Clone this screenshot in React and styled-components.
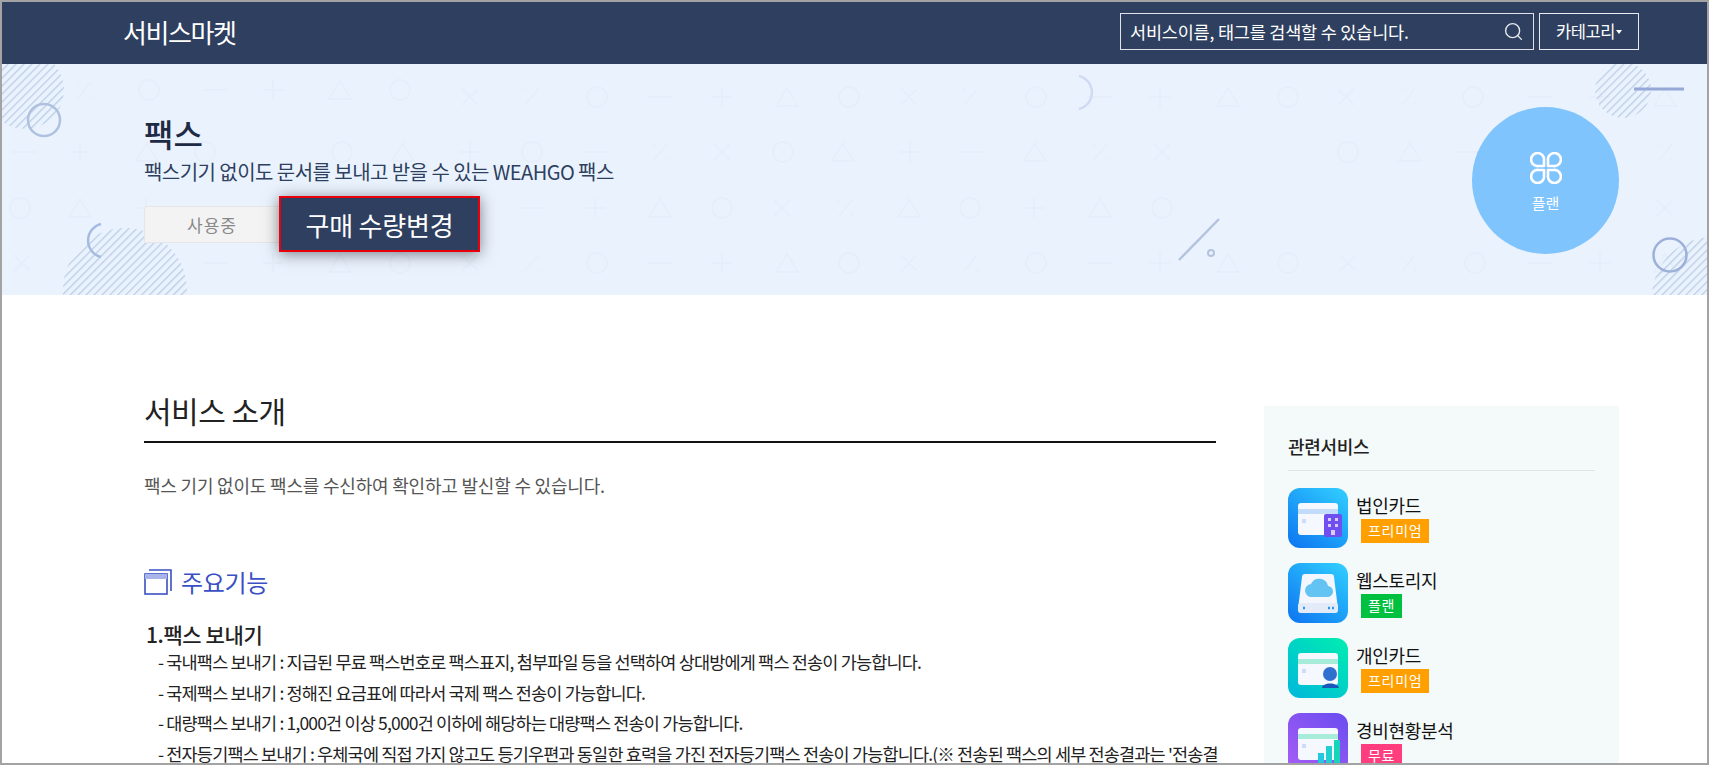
import styled, { createGlobalStyle } from 'styled-components';
import { Search } from 'lucide-react';

const features = [
	'- 국내팩스 보내기 : 지급된 무료 팩스번호로 팩스표지, 첨부파일 등을 선택하여 상대방에게 팩스 전송이 가능합니다.',
	'- 국제팩스 보내기 : 정해진 요금표에 따라서 국제 팩스 전송이 가능합니다.',
	'- 대량팩스 보내기 : 1,000건 이상 5,000건 이하에 해당하는 대량팩스 전송이 가능합니다.',
	"- 전자등기팩스 보내기 : 우체국에 직접 가지 않고도 등기우편과 동일한 효력을 가진 전자등기팩스 전송이 가능합니다.(※ 전송된 팩스의 세부 전송결과는 '전송결",
];

const services = [
	{ name: '법인카드', tag: '프리미엄', color: '#ff9f00', icon: 'corp' },
	{ name: '웹스토리지', tag: '플랜', color: '#00c13f', icon: 'storage' },
	{ name: '개인카드', tag: '프리미엄', color: '#ff9f00', icon: 'personal' },
	{ name: '경비현황분석', tag: '무료', color: '#ff3d7f', icon: 'chart' },
];

// background marks of the banner, [x, kind] per row
const patternRows = [
	{
		y: 97,
		items: [[84, '%'], [149, 'o'], [214, '-'], [273, '+'], [340, 't'], [400, 'o'], [470, 'x'], [531, '%'], [597, 'o'], [660, '-'], [722, '+'], [787, 't'], [849, 'o'], [909, 'x'], [970, '%'], [1036, 'o'], [1100, '-'], [1160, '+'], [1228, 't'], [1288, 'o'], [1346, 'x'], [1408, '%'], [1473, 'o'], [1540, '-'], [1600, '+'], [1665, 't']],
	},
	{
		y: 152,
		items: [[24, '-'], [80, '+'], [147, 't'], [205, 'o'], [342, 'o'], [403, 't'], [470, '+'], [532, 'o'], [598, '-'], [660, '%'], [722, 'x'], [783, 'o'], [843, 't'], [910, '+'], [970, '-'], [1035, 't'], [1100, '%'], [1162, 'x'], [1348, 'o'], [1410, 't'], [1470, '-'], [1665, '%']],
	},
	{
		y: 208,
		items: [[20, 'o'], [80, 't'], [146, '+'], [534, '-'], [595, '+'], [660, 't'], [722, 'o'], [782, 'x'], [845, '%'], [909, 't'], [970, 'o'], [1034, '+'], [1100, 't'], [1162, 'o'], [1665, 'x']],
	},
	{
		y: 263,
		items: [[22, 'x'], [215, '-'], [273, '+'], [340, 't'], [400, 'o'], [470, 'x'], [531, '%'], [597, 'o'], [660, '-'], [722, '+'], [787, 't'], [849, 'o'], [909, 'x'], [970, '%'], [1036, 'o'], [1100, '-'], [1160, '+'], [1228, 't'], [1288, 'o'], [1348, 'x'], [1408, '%'], [1475, 'o'], [1540, '-'], [1600, '+'], [1665, 't']],
	},
];

function Mark({ x, y, kind }) {
	if (kind === 'o') return <circle cx={x} cy={y} r={10} />;
	if (kind === '-') return <path d={`M${x - 12} ${y}h24`} />;
	if (kind === '+') return <path d={`M${x - 10} ${y}h20M${x} ${y - 10}v20`} />;
	if (kind === 't') return <path d={`M${x} ${y - 9}l11 18h-22z`} />;
	if (kind === 'x') return <path d={`M${x - 8} ${y - 8}l16 16M${x + 8} ${y - 8}l-16 16`} />;
	return <path d={`M${x + 7} ${y - 8}l-13 16M${x - 7} ${y - 7}h2M${x + 6} ${y + 7}h2`} />;
}

function BannerArt() {
	return (
		<Art viewBox='2 64 1705 231' aria-hidden='true'>
			<defs>
				<pattern id='hatch' width='5.6' height='5.6' patternUnits='userSpaceOnUse' patternTransform='rotate(45)'>
					<line x1='0' y1='0' x2='0' y2='5.6' stroke='#bccde8' strokeWidth='2.6' />
				</pattern>
			</defs>
			<g fill='none' stroke='#e5eefa' strokeWidth='1.8'>
				{patternRows.map((row) =>
					row.items.map(([x, kind]) => (
						<Mark key={`${row.y}-${x}`} x={x} y={row.y === 97 && x < 440 ? 90 : row.y} kind={kind} />
					))
				)}
			</g>
			<circle cx='25' cy='90' r='39' fill='url(#hatch)' />
			<circle cx='125' cy='290' r='62' fill='url(#hatch)' />
			<circle cx='1623' cy='90' r='28' fill='url(#hatch)' />
			<circle cx='1712' cy='297' r='60' fill='url(#hatch)' />
			<g fill='none' strokeWidth='2.5'>
				<circle cx='44' cy='120' r='16' stroke='#b0c1e0' />
				<path d='M101 224a17 17 0 0 0 0 33' stroke='#a6bbe2' />
				<path d='M1079 76a17 17 0 0 1 0 33' stroke='#cfdbf2' />
				<circle cx='1670' cy='255' r='16.5' stroke='#9db0da' />
				<path d='M1179 260L1219 219' stroke='#b4c3e0' />
				<circle cx='1211' cy='253' r='3' stroke='#b4c3e0' strokeWidth='2' />
				<path d='M1634 89h50' stroke='#96a8d8' strokeWidth='3' />
			</g>
		</Art>
	);
}

function CloverIcon() {
	return (
		<svg width='32' height='32' viewBox='0 0 32 32' fill='none' stroke='#fff' strokeWidth='2.6'>
			<path d='M14 14H8.5A6.5 6.5 0 1 1 14 8.5Z' strokeLinejoin='round' />
			<path d='M18 14h5.5A6.5 6.5 0 1 0 18 8.5Z' strokeLinejoin='round' />
			<path d='M14 18H8.5A6.5 6.5 0 1 0 14 23.5Z' strokeLinejoin='round' />
			<path d='M18 18h5.5A6.5 6.5 0 1 1 18 23.5Z' strokeLinejoin='round' />
		</svg>
	);
}

const iconBg = {
	corp: ['#32d0ff', '#0f7cf2'],
	storage: ['#32d0ff', '#0f7cf2'],
	personal: ['#00eeb0', '#00bcd8'],
	chart: ['#6a4cf0', '#a45cf5'],
};

function ServiceIcon({ kind }) {
	const [from, to] = iconBg[kind];
	const isCard = kind !== 'storage';
	const stripe = kind === 'corp' ? '#c3dcfb' : '#a6ecd8';
	return (
		<IconBox viewBox='0 0 60 60'>
			<defs>
				<linearGradient id={`bg-${kind}`} x1='1' y1='0' x2='0.2' y2='1'>
					<stop offset='0' stopColor={from} />
					<stop offset='1' stopColor={to} />
				</linearGradient>
			</defs>
			<rect width='60' height='60' rx='12' fill={`url(#bg-${kind})`} />
			{isCard && (
				<>
					<rect x='10' y='15' width='40' height='32' rx='3' fill='#f5f8fe' />
					<rect x='10' y='21' width='40' height='5' fill={stripe} />
					<rect x='14' y='31' width='4' height='4' fill='#cfdcf8' />
				</>
			)}
			{kind === 'corp' && (
				<>
					<rect x='36' y='26' width='18' height='23' rx='2' fill='#6f4ff0' />
					<path d='M40 30h3v3h-3zM47 30h3v3h-3zM40 36h3v3h-3zM47 36h3v3h-3z' fill='#d8ccfb' />
					<rect x='43' y='42' width='4' height='5' fill='#d8ccfb' />
				</>
			)}
			{kind === 'personal' && (
				<>
					<circle cx='42' cy='36' r='7' fill='#2f6fd0' />
					<path d='M34 50c0-6 16-6 17 0z' fill='#1b57b8' />
				</>
			)}
			{kind === 'chart' && (
				<>
					<rect x='30' y='40' width='6' height='10' fill='#20c8e0' />
					<rect x='38' y='33' width='6' height='17' fill='#20d0d0' />
					<rect x='46' y='27' width='6' height='23' fill='#18d4b8' />
				</>
			)}
			{kind === 'storage' && (
				<>
					<path d='M17 11h26a3 3 0 0 1 3 3l4 32a4 4 0 0 1-4 4H14a4 4 0 0 1-4-4l4-32a3 3 0 0 1 3-3z' fill='#f3f7fd' />
					<rect x='10' y='40' width='40' height='10' rx='3' fill='#e2ebf7' />
					<path d='M24 34a6.5 6.5 0 0 1-1-13 9 9 0 0 1 17 2 5.5 5.5 0 0 1-1 11z' fill='#63c3f3' />
					<path d='M15 45h2M40 45h2M44 45h2' stroke='#2a98f2' strokeWidth='2.4' />
				</>
			)}
		</IconBox>
	);
}

export default function App() {
	return (
		<Frame>
			<GlobalStyle />
			<Nav>
				<Logo>서비스마켓</Logo>
				<NavActions>
					<SearchBox>
						<SearchText>서비스이름, 태그를 검색할 수 있습니다.</SearchText>
						<Search size={21} strokeWidth={1.6} color='#e4e7ec' />
					</SearchBox>
					<CategoryButton>
						카테고리
						<Caret />
					</CategoryButton>
				</NavActions>
			</Nav>

			<Banner>
				<BannerArt />
				<BannerText>
					<Title>팩스</Title>
					<Subtitle>팩스기기 없이도 문서를 보내고 받을 수 있는 WEAHGO 팩스</Subtitle>
					<ButtonRow>
						<StatusButton>사용중</StatusButton>
						<ChangeButton>구매 수량변경</ChangeButton>
					</ButtonRow>
				</BannerText>
				<PlanCircle>
					<CloverIcon />
					<PlanLabel>플랜</PlanLabel>
				</PlanCircle>
			</Banner>

			<Body>
				<Main>
					<SectionTitle>서비스 소개</SectionTitle>
					<Intro>팩스 기기 없이도 팩스를 수신하여 확인하고 발신할 수 있습니다.</Intro>
					<FeatureHeading>
						<svg width='28' height='26' viewBox='0 0 28 26' fill='none'>
							<rect x='1' y='5' width='22' height='20' stroke='#3a50c4' strokeWidth='1.6' />
							<rect x='1' y='5' width='22' height='5' fill='#a9b4ea' />
							<path d='M5 1h22v21' stroke='#3a50c4' strokeWidth='1.6' />
						</svg>
						주요기능
					</FeatureHeading>
					<FeatureTitle>1.팩스 보내기</FeatureTitle>
					{features.map((text) => (
						<FeatureLine key={text}>{text}</FeatureLine>
					))}
				</Main>
				<Side>
					<SideTitle>관련서비스</SideTitle>
					<ServiceList>
						{services.map((s) => (
							<Service key={s.name}>
								<ServiceIcon kind={s.icon} />
								<div>
									<ServiceName>{s.name}</ServiceName>
									<Tag color={s.color}>{s.tag}</Tag>
								</div>
							</Service>
						))}
					</ServiceList>
				</Side>
			</Body>
		</Frame>
	);
}

const GlobalStyle = createGlobalStyle`
	html, body {
		margin: 0;
		background: #fff;
		overflow: hidden;
	}
	* {
		box-sizing: border-box;
	}
`;

const Frame = styled.div`
	height: 765px;
	border: 2px solid #a3a3a3;
	overflow: hidden;
	font-family: 'Noto Sans CJK KR', 'Noto Sans', sans-serif;
	color: #222;
`;

const Nav = styled.header`
	height: 62px;
	padding: 0 68px 4px 121px;
	display: flex;
	justify-content: space-between;
	align-items: center;
	background: #2e3f5f;
`;

const Logo = styled.div`
	font-size: 26px;
	font-weight: 400;
	letter-spacing: -1.4px;
	color: #fff;
`;

const NavActions = styled.div`
	display: flex;
	gap: 5px;
`;

const SearchBox = styled.div`
	width: 414px;
	height: 37px;
	padding: 0 9px;
	display: flex;
	justify-content: space-between;
	align-items: center;
	border: 1px solid #dfe2e8;
`;

const SearchText = styled.span`
	font-size: 17.5px;
	letter-spacing: -0.2px;
	color: #fff;
`;

const CategoryButton = styled.div`
	width: 100px;
	height: 37px;
	display: flex;
	justify-content: center;
	align-items: center;
	gap: 1px;
	border: 1px solid #e8eaee;
	font-size: 16.5px;
	letter-spacing: -0.4px;
	color: #fff;
`;

const Caret = styled.span`
	margin-top: 2px;
	border-top: 4px solid #fff;
	border-left: 3px solid transparent;
	border-right: 3px solid transparent;
`;

const Banner = styled.section`
	position: relative;
	height: 231px;
	padding: 43px 88px 0 142px;
	display: flex;
	justify-content: space-between;
	align-items: flex-start;
	background: #eaf3fd;
`;

const Art = styled.svg`
	position: absolute;
	left: 0;
	top: 0;
	width: 1705px;
	height: 231px;
`;

const BannerText = styled.div`
	position: relative;
	margin-top: 8px;
	display: flex;
	flex-direction: column;
`;

const Title = styled.h1`
	margin: 0;
	font-size: 32px;
	line-height: 36px;
	font-weight: 500;
	color: #1f2b45;
`;

const Subtitle = styled.p`
	margin: 8px 0 0;
	font-size: 20px;
	line-height: 26px;
	letter-spacing: -0.55px;
	color: #2e3f5f;
`;

const ButtonRow = styled.div`
	margin-top: 11px;
	display: flex;
	align-items: center;
`;

const StatusButton = styled.div`
	width: 136px;
	height: 37px;
	display: flex;
	justify-content: center;
	align-items: center;
	background: #f3f3f3;
	border: 1px solid #e6e6e6;
	border-radius: 2px;
	font-size: 17px;
	letter-spacing: 1px;
	color: #888;
`;

const ChangeButton = styled.div`
	z-index: 1;
	width: 201px;
	height: 56px;
	margin-left: -1px;
	display: flex;
	justify-content: center;
	align-items: center;
	background: #2e3f5f;
	border: 2px solid #e8000c;
	box-shadow: 0 2px 14px rgba(30, 30, 40, 0.55);
	font-size: 26px;
	font-weight: 400;
	letter-spacing: -0.2px;
	color: #fff;
`;

const PlanCircle = styled.div`
	position: relative;
	width: 147px;
	height: 147px;
	padding-top: 4px;
	display: flex;
	flex-direction: column;
	justify-content: center;
	align-items: center;
	gap: 8px;
	border-radius: 50%;
	background: #7fc4fd;
`;

const PlanLabel = styled.span`
	font-size: 15px;
	color: #fff;
`;

const Body = styled.div`
	padding: 95px 88px 0 142px;
	display: flex;
	gap: 48px;
`;

const Main = styled.main`
	width: 1072px;
	flex-shrink: 0;
`;

const SectionTitle = styled.h2`
	margin: 0;
	padding-bottom: 11px;
	border-bottom: 2px solid #111;
	font-size: 30px;
	line-height: 40px;
	font-weight: 400;
	letter-spacing: -0.5px;
	color: #222;
`;

const Intro = styled.p`
	margin: 30px 0 0;
	font-size: 18px;
	line-height: 24px;
	letter-spacing: -0.2px;
	color: #555;
`;

const FeatureHeading = styled.h3`
	margin: 69px 0 0;
	display: flex;
	align-items: center;
	gap: 9px;
	font-size: 24px;
	line-height: 32px;
	font-weight: 400;
	letter-spacing: -0.3px;
	color: #3a50c4;
`;

const FeatureTitle = styled.div`
	margin: 24px 0 0 2px;
	font-size: 21px;
	line-height: 25px;
	font-weight: 500;
	letter-spacing: -0.4px;
	color: #222;
`;

const FeatureLine = styled.div`
	padding-left: 14px;
	font-size: 17.5px;
	line-height: 30.5px;
	letter-spacing: -0.83px;
	white-space: nowrap;
	color: #222;
`;

const Side = styled.aside`
	width: 355px;
	flex-shrink: 0;
	height: 400px;
	margin-top: 16px;
	padding: 24px 24px 0;
	background: #f4f9f9;
`;

const SideTitle = styled.div`
	padding-bottom: 8px;
	border-bottom: 1px solid #dfe5e5;
	font-size: 18px;
	line-height: 32px;
	font-weight: 500;
	letter-spacing: -0.3px;
	color: #222;
`;

const ServiceList = styled.div`
	margin-top: 17px;
	display: flex;
	flex-direction: column;
	gap: 15px;
`;

const Service = styled.div`
	display: flex;
	align-items: flex-start;
	gap: 8px;
`;

const IconBox = styled.svg`
	width: 60px;
	height: 60px;
	flex-shrink: 0;
`;

const ServiceName = styled.div`
	font-size: 18px;
	line-height: 26px;
	margin-top: 4px;
	letter-spacing: -0.3px;
	color: #111;
`;

const Tag = styled.span`
	display: block;
	width: fit-content;
	height: 24px;
	margin-top: 1px;
	margin-left: 5px;
	padding: 0 7px;
	background: ${(props) => props.color};
	font-size: 14px;
	line-height: 23px;
	letter-spacing: 0.7px;
	color: #fff;
`;
